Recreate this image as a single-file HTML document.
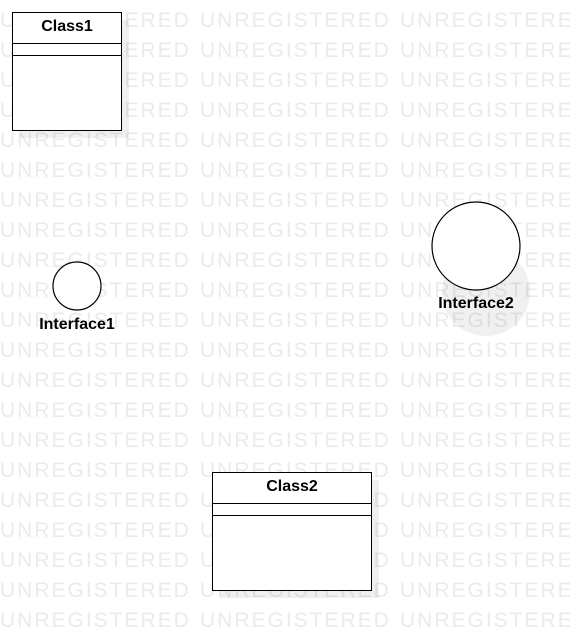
<!DOCTYPE html>
<html><head><style>
body{margin:0;width:570px;height:641px;background:#fff;position:relative;overflow:hidden;font-family:"Liberation Sans",Arial,sans-serif}
.wm{position:absolute;font-size:21px;color:#ebebeb;white-space:nowrap;line-height:21px;letter-spacing:2px;transform:scaleX(1.0)}
.box{position:absolute;border:1px solid #000;background:#fff;box-sizing:border-box}
.box .t{height:30px;border-bottom:1px solid #000;text-align:center;font-weight:bold;font-size:16px;line-height:28px}
.box .a{height:11px;border-bottom:1px solid #000}
.lbl{position:absolute;font-weight:bold;font-size:16px;transform:translateX(-50%)}
</style></head><body>
<div id="w"></div>
<script>
var h='';for(var r=0;r<21;r++){for(var c=0;c<3;c++){h+='<div class="wm" style="left:'+(c*200)+'px;top:'+(10+r*30)+'px">UNREGISTERED</div>';}}
document.getElementById('w').innerHTML=h;
</script>
<div style="position:absolute;left:20px;top:20px;width:109px;height:118px;background:rgba(0,0,0,0.06)"></div>
<div class="box" style="left:12px;top:12px;width:110px;height:119px"><div class="t">Class1</div><div class="a"></div></div>
<div style="position:absolute;left:220px;top:480px;width:159px;height:118px;background:rgba(0,0,0,0.06)"></div>
<div class="box" style="left:212px;top:472px;width:160px;height:119px"><div class="t">Class2</div><div class="a"></div></div>
<svg style="position:absolute;left:0;top:0" width="570" height="641">
<circle cx="486" cy="292" r="44" fill="rgba(0,0,0,0.06)"/>
<circle cx="476" cy="246" r="44" fill="#fff" stroke="#000" stroke-width="1.2"/>
<circle cx="77" cy="286" r="24" fill="#fff" stroke="#000" stroke-width="1.2"/>
</svg>
<div class="lbl" style="left:77px;top:316px">Interface1</div>
<div class="lbl" style="left:476px;top:295px">Interface2</div>
</body></html>
